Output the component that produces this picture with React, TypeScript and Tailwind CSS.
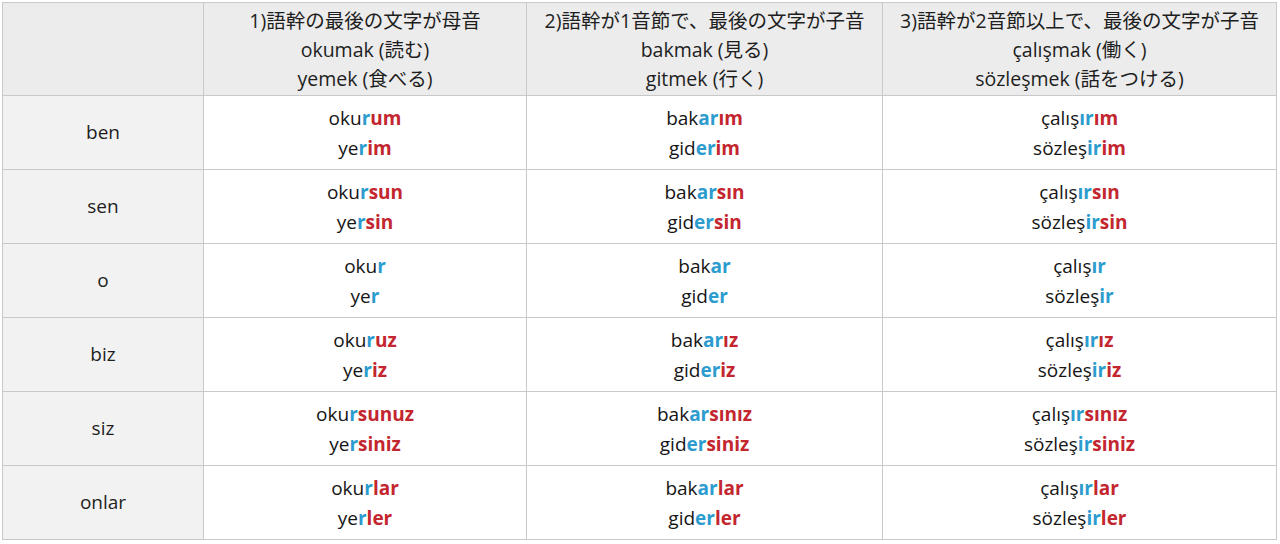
type Part = [string, string, string];

interface Row {
  person: string;
  cells: Part[][];
}

const rows: Row[] = [
  {
    person: "ben",
    cells: [
      [["oku", "r", "um"], ["ye", "r", "im"]],
      [["bak", "ar", "ım"], ["gid", "er", "im"]],
      [["çalış", "ır", "ım"], ["sözleş", "ir", "im"]],
    ],
  },
  {
    person: "sen",
    cells: [
      [["oku", "r", "sun"], ["ye", "r", "sin"]],
      [["bak", "ar", "sın"], ["gid", "er", "sin"]],
      [["çalış", "ır", "sın"], ["sözleş", "ir", "sin"]],
    ],
  },
  {
    person: "o",
    cells: [
      [["oku", "r", ""], ["ye", "r", ""]],
      [["bak", "ar", ""], ["gid", "er", ""]],
      [["çalış", "ır", ""], ["sözleş", "ir", ""]],
    ],
  },
  {
    person: "biz",
    cells: [
      [["oku", "r", "uz"], ["ye", "r", "iz"]],
      [["bak", "ar", "ız"], ["gid", "er", "iz"]],
      [["çalış", "ır", "ız"], ["sözleş", "ir", "iz"]],
    ],
  },
  {
    person: "siz",
    cells: [
      [["oku", "r", "sunuz"], ["ye", "r", "siniz"]],
      [["bak", "ar", "sınız"], ["gid", "er", "siniz"]],
      [["çalış", "ır", "sınız"], ["sözleş", "ir", "siniz"]],
    ],
  },
  {
    person: "onlar",
    cells: [
      [["oku", "r", "lar"], ["ye", "r", "ler"]],
      [["bak", "ar", "lar"], ["gid", "er", "ler"]],
      [["çalış", "ır", "lar"], ["sözleş", "ir", "ler"]],
    ],
  },
];

const headers = [
  ["1)語幹の最後の文字が母音", "okumak (読む)", "yemek (食べる)"],
  ["2)語幹が1音節で、最後の文字が子音", "bakmak (見る)", "gitmek (行く)"],
  ["3)語幹が2音節以上で、最後の文字が子音", "çalışmak (働く)", "sözleşmek (話をつける)"],
];

function Word({ part }: { part: Part }) {
  const [stem, mid, end] = part;
  return (
    <div>
      <span>{stem}</span>
      <span className="font-bold text-[#2c9ccf]">{mid}</span>
      {end && <span className="font-bold text-[#c3262e]">{end}</span>}
    </div>
  );
}

export default function App() {
  return (
    <div
      className="w-[1280px] h-[544px] bg-white pl-[2px] pt-[2px] overflow-hidden"
      style={{ fontFamily: '"Open Sans", "Noto Sans CJK JP", sans-serif' }}
    >
      <table className="table-fixed border-collapse text-center text-[19px] text-[#151515]">
        <colgroup>
          <col className="w-[201px]" />
          <col className="w-[323px]" />
          <col className="w-[356px]" />
          <col className="w-[394px]" />
        </colgroup>
        <thead>
          <tr className="h-[93px] bg-[#ececec]">
            <th className="border border-[#c9c9c9]"></th>
            {headers.map((h, i) => (
              <th key={i} className="border border-[#c9c9c9] font-normal text-[19.5px] leading-[29px] text-[#1e1e1e]">
                {h.map((line, j) => (
                  <div key={j}>{line}</div>
                ))}
              </th>
            ))}
          </tr>
        </thead>
        <tbody>
          {rows.map((r) => (
            <tr key={r.person} className="h-[74px]">
              <td className="border border-[#c9c9c9] bg-[#f2f2f2] text-[#1e1e1e]">{r.person}</td>
              {r.cells.map((c, i) => (
                <td key={i} className="border border-[#c9c9c9] leading-[30px]">
                  {c.map((p, j) => (
                    <Word key={j} part={p} />
                  ))}
                </td>
              ))}
            </tr>
          ))}
        </tbody>
      </table>
    </div>
  );
}
